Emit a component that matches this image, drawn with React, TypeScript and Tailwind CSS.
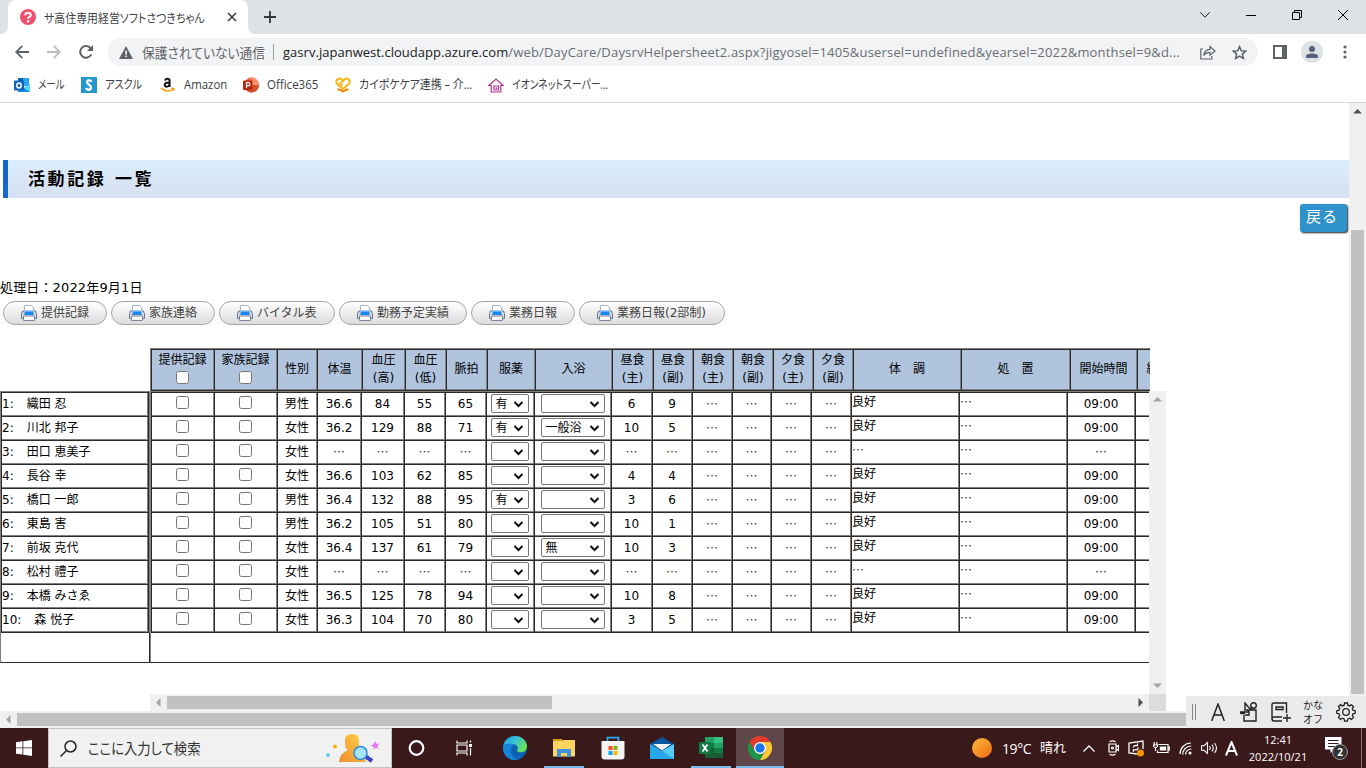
import { ReactNode } from 'react';

const PAGE_FONT = "font-['DejaVu_Sans','Noto_Sans_CJK_JP',sans-serif]";
const UI_FONT = "font-['Open_Sans','Noto_Sans_CJK_JP',sans-serif]";
const CELL = 'shrink-0 border-r border-b border-[#2b2b2b] shadow-[inset_-1px_-1px_0_#808080]';

interface Column {
  label: string[];
  head: string;
  body: string;
}

const columns: Column[] = [
  { label: ['提供記録'], head: 'w-[63px]', body: 'w-[63px]' },
  { label: ['家族記録'], head: 'w-[63px]', body: 'w-[63px]' },
  { label: ['性別'], head: 'w-[40px]', body: 'w-[40px]' },
  { label: ['体温'], head: 'w-[45px]', body: 'w-[44px]' },
  { label: ['血圧', '(高)'], head: 'w-[43px]', body: 'w-[43px]' },
  { label: ['血圧', '(低)'], head: 'w-[41px]', body: 'w-[41px]' },
  { label: ['脈拍'], head: 'w-[41px]', body: 'w-[41px]' },
  { label: ['服薬'], head: 'w-[48px]', body: 'w-[48px]' },
  { label: ['入浴'], head: 'w-[77px]', body: 'w-[77px]' },
  { label: ['昼食', '(主)'], head: 'w-[41px]', body: 'w-[41px]' },
  { label: ['昼食', '(副)'], head: 'w-[40px]', body: 'w-[40px]' },
  { label: ['朝食', '(主)'], head: 'w-[40px]', body: 'w-[40px]' },
  { label: ['朝食', '(副)'], head: 'w-[40px]', body: 'w-[39px]' },
  { label: ['夕食', '(主)'], head: 'w-[40px]', body: 'w-[40px]' },
  { label: ['夕食', '(副)'], head: 'w-[40px]', body: 'w-[40px]' },
  { label: ['体　調'], head: 'w-[108px]', body: 'w-[108px]' },
  { label: ['処　置'], head: 'w-[109px]', body: 'w-[108px]' },
  { label: ['開始時間'], head: 'w-[67px]', body: 'w-[68px]' },
  { label: ['終了時間'], head: 'w-[67px]', body: 'w-[68px]' },
];

interface Person {
  name: string;
  sex: string;
  temp: string;
  high: string;
  low: string;
  pulse: string;
  medicine: string;
  bath: string;
  main: string;
  side: string;
  condition: string;
  start: string;
}

const NONE = '…';

const people: Person[] = [
  { name: '織田 忍', sex: '男性', temp: '36.6', high: '84', low: '55', pulse: '65', medicine: '有', bath: '', main: '6', side: '9', condition: '良好', start: '09:00' },
  { name: '川北 邦子', sex: '女性', temp: '36.2', high: '129', low: '88', pulse: '71', medicine: '有', bath: '一般浴', main: '10', side: '5', condition: '良好', start: '09:00' },
  { name: '田口 恵美子', sex: '女性', temp: NONE, high: NONE, low: NONE, pulse: NONE, medicine: '', bath: '', main: NONE, side: NONE, condition: NONE, start: NONE },
  { name: '長谷 幸', sex: '女性', temp: '36.6', high: '103', low: '62', pulse: '85', medicine: '', bath: '', main: '4', side: '4', condition: '良好', start: '09:00' },
  { name: '橋口 一郎', sex: '男性', temp: '36.4', high: '132', low: '88', pulse: '95', medicine: '有', bath: '', main: '3', side: '6', condition: '良好', start: '09:00' },
  { name: '東島 害', sex: '男性', temp: '36.2', high: '105', low: '51', pulse: '80', medicine: '', bath: '', main: '10', side: '1', condition: '良好', start: '09:00' },
  { name: '前坂 克代', sex: '女性', temp: '36.4', high: '137', low: '61', pulse: '79', medicine: '', bath: '無', main: '10', side: '3', condition: '良好', start: '09:00' },
  { name: '松村 禮子', sex: '女性', temp: NONE, high: NONE, low: NONE, pulse: NONE, medicine: '', bath: '', main: NONE, side: NONE, condition: NONE, start: NONE },
  { name: '本橋 みさゑ', sex: '女性', temp: '36.5', high: '125', low: '78', pulse: '94', medicine: '', bath: '', main: '10', side: '8', condition: '良好', start: '09:00' },
  { name: '森 悦子', sex: '女性', temp: '36.3', high: '104', low: '70', pulse: '80', medicine: '', bath: '', main: '3', side: '5', condition: '良好', start: '09:00' },
];

const reports = [
  { label: '提供記録', width: 'w-[104px]' },
  { label: '家族連絡', width: 'w-[104px]' },
  { label: 'バイタル表', width: 'w-[116px]' },
  { label: '勤務予定実績', width: 'w-[128px]' },
  { label: '業務日報', width: 'w-[104px]' },
  { label: '業務日報(2部制)', width: 'w-[146px]' },
];

/* ---------- browser ---------- */

const TabStrip = () => (
  <div className="flex h-[34px] shrink-0 items-center bg-[#dee1e6]">
    <svg className="self-end" width="8" height="8" viewBox="0 0 8 8"><path d="M8 0v8H0q8 0 8-8" fill="#fff" /></svg>
    <div className="flex h-[34px] w-[240px] items-center rounded-t-lg bg-white pl-3">
      <svg width="16" height="16" viewBox="0 0 16 16">
        <circle cx="8" cy="8" r="8" fill="#f0506e" />
        <path d="M5.2 6.2C5.2 3 10.8 3 10.8 6.1 10.8 8 8.1 7.9 8.1 9.8" fill="none" stroke="#fff" strokeWidth="2" />
        <circle cx="8.1" cy="12.3" r="1.2" fill="#fff" />
      </svg>
      <div className="ml-2 w-[168px]">
        <span className="inline-block origin-left scale-x-[0.91] text-[12px] leading-5 whitespace-nowrap text-[#3c4043] [font-feature-settings:'palt']">
          サ高住専用経営ソフトさつきちゃん
        </span>
      </div>
      <svg className="ml-[15px]" width="10" height="10" viewBox="0 0 10 10">
        <path d="M1 1l8 8M9 1L1 9" stroke="#3c4043" strokeWidth="1.6" />
      </svg>
    </div>
    <svg className="self-end" width="8" height="8" viewBox="0 0 8 8"><path d="M0 0v8h8q-8 0-8-8" fill="#fff" /></svg>
    <svg className="ml-2" width="12" height="12" viewBox="0 0 12 12">
      <path d="M6 0v12M0 6h12" stroke="#35363a" strokeWidth="1.8" />
    </svg>
    <div className="mr-[18px] mb-1 ml-auto flex items-center gap-9">
      <svg width="10" height="6" viewBox="0 0 10 6" fill="none" stroke="#222"><path d="M.3.3L5 5.2 9.7.3" /></svg>
      <svg width="10" height="10" viewBox="0 0 10 10"><path d="M0 5.5h10" stroke="#000" /></svg>
      <svg width="10" height="10" viewBox="0 0 10 10" fill="none" stroke="#000"><path d="M.5 2.5h7v7h-7zM2.5 2.5v-2h7v7h-2" /></svg>
      <svg width="10" height="10" viewBox="0 0 10 10" stroke="#000"><path d="M0 0l10 10M10 0L0 10" /></svg>
    </div>
  </div>
);

const Toolbar = () => (
  <div className="flex h-9 shrink-0 items-center bg-white">
    <svg className="ml-[15px]" width="14" height="14" viewBox="0 0 14 14" fill="none" stroke="#5f6368" strokeWidth="1.8">
      <path d="M14 7H1.5M7.3.8L1.2 7l6.1 6.2" />
    </svg>
    <svg className="ml-[18px]" width="14" height="14" viewBox="0 0 14 14" fill="none" stroke="#babcbe" strokeWidth="1.8">
      <path d="M0 7h12.5M6.7.8L12.8 7l-6.1 6.2" />
    </svg>
    <svg className="ml-[18px]" width="15" height="14" viewBox="0 0 15 14">
      <path d="M12.2 9.4A5.8 5.8 0 1 1 11.6 3.4" fill="none" stroke="#5f6368" strokeWidth="2" />
      <path d="M14 0v6H8z" fill="#5f6368" />
    </svg>
    <div className="ml-[14px] flex h-7 w-[1150px] items-center rounded-full bg-[#f1f3f4] pl-[11px]">
      <svg width="14" height="13" viewBox="0 0 14 13">
        <path d="M7 0l7 13H0z" fill="#5f6368" />
        <path d="M6.3 4.5h1.5v4H6.3zM6.3 9.6h1.5v1.5H6.3z" fill="#fff" />
      </svg>
      <div className="ml-[9px] w-[131px]">
        <span className="inline-block origin-left scale-x-[0.91] text-[14px] leading-5 whitespace-nowrap text-[#5f6368] [font-feature-settings:'palt']">保護されていない通信</span>
      </div>
      <span className="h-4 w-px bg-[#9aa0a6]" />
      <span className="ml-[9px] w-[908px] text-[13px] leading-5 tracking-[0.18px] whitespace-nowrap text-[#6a6e73]">
        <span className="tracking-[0.03px] text-[#202124]">gasrv.japanwest.cloudapp.azure.com</span>
        /web/DayCare/DaysrvHelpersheet2.aspx?jigyosel=1405&amp;usersel=undefined&amp;yearsel=2022&amp;monthsel=9&amp;d...
      </span>
      <svg className="ml-[9px]" width="16" height="15" viewBox="0 0 16 15" fill="none" stroke="#5f6368" strokeWidth="1.2">
        <path d="M3 4H.8v10h11v-3" />
        <path d="M3.8 10.5C4.3 6.5 6.5 4.5 10 4.4V1.5l5 4.5-5 4.2V7.4C7.2 7.4 5.3 8.3 3.8 10.5z" />
      </svg>
      <svg className="ml-4" width="15" height="15" viewBox="0 0 15 15" fill="none" stroke="#5f6368" strokeWidth="1.5">
        <path d="M7.5 1.6l1.8 4.1 4.5.4-3.4 3 1 4.4-3.9-2.3-3.9 2.3 1-4.4-3.4-3 4.5-.4z" />
      </svg>
    </div>
    <svg className="ml-[15px]" width="14" height="14" viewBox="0 0 14 14">
      <path d="M1 1h12v12H1z" fill="#fff" stroke="#5f6368" strokeWidth="2" />
      <path d="M9 1h4v12H9z" fill="#5f6368" />
    </svg>
    <span className="ml-[14px] flex h-[22px] w-[22px] items-center justify-center rounded-full bg-[#dee1e6]">
      <svg width="12" height="12" viewBox="0 0 12 12" fill="#56617a">
        <circle cx="6" cy="3" r="3" />
        <path d="M0 12V10.2C0 6.6 12 6.6 12 10.2V12z" />
      </svg>
    </span>
    <svg className="ml-5" width="4" height="14" viewBox="0 0 4 14" fill="#5f6368">
      <circle cx="2" cy="2" r="1.6" />
      <circle cx="2" cy="7" r="1.6" />
      <circle cx="2" cy="12" r="1.6" />
    </svg>
  </div>
);

interface BookmarkProps {
  label: string;
  width: string;
  scale: string;
  children: ReactNode;
}

const Bookmark = ({ label, width, scale, children }: BookmarkProps) => (
  <div className={`flex shrink-0 items-center gap-2 ${width}`}>
    <svg className="shrink-0" width="16" height="16" viewBox="0 0 16 16">{children}</svg>
    <span className={`inline-block origin-left text-[12px] leading-5 whitespace-nowrap text-[#3c4043] [font-feature-settings:'palt'] ${scale}`}>{label}</span>
  </div>
);

const Bookmarks = () => (
  <div className="flex h-[33px] shrink-0 items-center border-b border-[#d5d7da] bg-white pb-[3px] pl-[14px]">
    <Bookmark label="メール" width="w-[67px]" scale="scale-x-[0.79]">
      <path d="M4 1h11v8H4z" fill="#28a8ea" />
      <path d="M4 1h5v7H4z" fill="#0364b8" />
      <path d="M4 7l6 4 6-4v8H4z" fill="#1490df" />
      <path d="M10 11l6-4v8z" fill="#50d9ff" />
      <rect y="3.5" width="10" height="10" rx="1" fill="#0f63b8" />
      <ellipse cx="5" cy="8.5" rx="2.2" ry="2.5" fill="none" stroke="#fff" strokeWidth="1.5" />
    </Bookmark>
    <Bookmark label="アスクル" width="w-[79px]" scale="scale-x-[0.85]">
      <path d="M0 0h16v16H0z" fill="#2497cd" />
      <path d="M10.6 4.8C9.5 2.6 5.7 3 6.1 5.4 6.5 7.8 10.3 8 10 10.7 9.6 13.4 5.9 13.3 5 11" fill="none" stroke="#fff" strokeWidth="2.4" />
    </Bookmark>
    <Bookmark label="Amazon" width="w-[83px]" scale="scale-x-[0.95]">
      <path d="M5.2 3.7C5.6 1.1 9.6 1.2 9.6 4v6M9.3 5.4C5.5 5.3 4.7 6.6 4.7 8c0 2.4 3.9 2.2 4.7-.2" fill="none" stroke="#111" strokeWidth="2" />
      <path d="M.8 10.8C4.7 14.9 10 14.7 13.8 12M11.5 11.4c2.5-.7 3.2 0 1.9 2.3" fill="none" stroke="#f90" strokeWidth="1.5" />
    </Bookmark>
    <Bookmark label="Office365" width="w-[92px]" scale="scale-x-[0.96]">
      <circle cx="8.5" cy="8" r="7.5" fill="#ed6c47" />
      <path d="M8.5.5A7.5 7.5 0 0 1 16 8H8.5z" fill="#ff8f6b" />
      <path d="M1 8h15a7.5 7.5 0 0 1-15 0z" fill="#d35230" />
      <rect y="3.5" width="9.5" height="9.5" rx="1" fill="#b7280f" />
      <path d="M3.5 11V5.7h1.7c2.4 0 2.4 3.2 0 3.2H3.5" fill="none" stroke="#fff" strokeWidth="1.2" />
    </Bookmark>
    <Bookmark label="カイポケケア連携 – 介..." width="w-[153px]" scale="scale-x-[0.91]">
      <path d="M8 12L2.3 7C-.3 3.8 3.5-.3 6.3 2.3L8 4" fill="none" stroke="#fdb515" strokeWidth="2" />
      <path d="M4.500 5.500L7.500 8.500M6.500 5.500L9.700 2.300c2.800-2.600 6.600 1.500 4 4.700L8 12" fill="none" stroke="#fdb515" strokeWidth="2" />
      <path d="M2.5 12.500c2-.5 3.500.5 5.500 2 2-1.500 3.500-2.500 5.500-2" fill="none" stroke="#f08300" strokeWidth="2" />
    </Bookmark>
    <Bookmark label="イオンネットスーパー..." width="w-[140px]" scale="scale-x-[0.82]">
      <path d="M1 8.5L8 2l7 6.5h-2.2V15H3.2V8.5z" fill="none" stroke="#b5338a" strokeWidth="1.2" />
      <path d="M6 9h4.5v4H6z" fill="none" stroke="#b5338a" strokeWidth="1.2" />
      <path d="M7.5 10.5H9V12H7.5z" fill="#b5338a" />
    </Bookmark>
  </div>
);

/* ---------- page ---------- */

const PrinterIcon = () => (
  <svg className="shrink-0" width="16" height="16" viewBox="0 0 16 16">
    <path d="M3.5 8V.5h7l2 2V8z" fill="#fff" stroke="#a9b4cc" />
    <path d="M3 6H1.500L.5 9v4.500h15V9l-1-3H13" fill="#d9dbe5" stroke="#6f7488" />
    <path d="M4 5.500h8l.8 4.500H3.200z" fill="#1a86ef" />
    <path d="M4 5h8v1.500H4z" fill="#9fd2fb" />
    <path d="M2.500 11h11v4.500h-11z" fill="#fafafc" stroke="#80859a" />
  </svg>
);

const SelectBox = ({ value, width }: { value: string; width: string }) => (
  <div className={`flex h-[19px] items-center rounded-[2px] border border-[#767676] bg-white pl-1 ${width}`}>
    <span className="leading-4">{value}</span>
    <svg className="mr-1 ml-auto" width="11" height="8" viewBox="0 0 11 8">
      <path d="M1.5 2l4 4 4-4" fill="none" stroke="#111" strokeWidth="2" />
    </svg>
  </div>
);

const Value = ({ text }: { text: string }) =>
  text === NONE ? (
    <span className="font-['Noto_Sans_CJK_JP',sans-serif] text-[#333]">{text}</span>
  ) : (
    <span>{text}</span>
  );

const HeaderRow = () => (
  <div className="h-[43px] w-[1000px] overflow-hidden border-t border-l border-[#808080]">
    <div className="flex h-[42px] border-t border-l border-[#2b2b2b]">
      {columns.map((col, i) => (
        <div key={i} className={`${CELL} ${col.head} flex h-[41px] flex-col items-center justify-center bg-[#b0c4de] pr-px pb-0.5 text-center leading-[18px]`}>
          {col.label.map((line) => (
            <div key={line} className="whitespace-nowrap">{line}</div>
          ))}
          {i < 2 && <input type="checkbox" className="mt-0.5 mb-[3px] h-[13px] w-[13px]" />}
        </div>
      ))}
    </div>
  </div>
);

const BodyRow = ({ person }: { person: Person }) => {
  const cells: ReactNode[] = [
    <input type="checkbox" className="mr-px mb-0.5 h-[13px] w-[13px]" />,
    <input type="checkbox" className="mr-px mb-0.5 h-[13px] w-[13px]" />,
    ...[person.sex, person.temp, person.high, person.low, person.pulse].map((v, i) => <Value key={i} text={v} />),
    <SelectBox value={person.medicine} width="mr-px w-[38px]" />,
    <SelectBox value={person.bath} width="w-[64px]" />,
    ...[person.main, person.side, NONE, NONE, NONE, NONE].map((v, i) => <Value key={i} text={v} />),
    <Value text={person.condition} />,
    <Value text={NONE} />,
    <Value text={person.start} />,
    null,
  ];

  return (
    <div className="flex">
      {cells.map((cell, i) => (
        <div key={i} className={`${CELL} ${columns[i].body} flex h-6 items-center ${i === 15 || i === 16 ? 'pb-[5px]' : 'justify-center pr-px pb-0.5'}`}>
          {cell}
        </div>
      ))}
    </div>
  );
};

const Arrow = ({ dir, dark }: { dir: 'up' | 'down' | 'left' | 'right'; dark?: boolean }) => {
  const paths = { up: 'M4 10.5h9L8.5 6z', down: 'M4 6.5h9L8.5 11z', left: 'M10.5 4v9L6 8.5z', right: 'M6.5 4v9L11 8.5z' };
  return (
    <svg className="shrink-0" width="17" height="17" viewBox="0 0 17 17">
      <path d={paths[dir]} fill={dark ? '#505050' : '#a3a3a3'} />
    </svg>
  );
};

const NameList = () => (
  <div className="mt-[43px] w-[150px] shrink-0">
    <div className="border-t border-r border-l border-[#808080]">
      <div className="border-t border-l border-[#2b2b2b]">
        {people.map((person, i) => (
          <div key={person.name} className={`${CELL} flex h-6 items-center gap-[13px] pb-0.5 whitespace-nowrap`}>
            <span>{i + 1}:</span>
            <span>{person.name}</span>
          </div>
        ))}
      </div>
    </div>
    <div className="h-[30px] border-r border-b border-l border-[#2b2b2b] border-l-[#808080]" />
  </div>
);

const RecordTable = () => (
  <div className="mt-[23px] flex text-[12px]">
    <NameList />
    <div className="w-[1016px]">
      <HeaderRow />
      <div className="flex h-[303px]">
        <div className="w-[999px] overflow-hidden">
          <div className="border-t border-l border-[#808080]">
            <div className="border-t border-l border-[#2b2b2b]">
              {people.map((person) => <BodyRow key={person.name} person={person} />)}
            </div>
          </div>
          <div className="h-[30px] border-b border-l border-[#2b2b2b] border-l-[#808080]" />
        </div>
        <div className="flex w-[17px] flex-col justify-between bg-[#f0f0f0]">
          <Arrow dir="up" />
          <Arrow dir="down" />
        </div>
      </div>
      <div className="flex h-[17px]">
        <div className="flex w-[999px] items-center bg-[#f0f0f0]">
          <Arrow dir="left" />
          <div className="h-[13px] w-[385px] bg-[#c1c1c1]" />
          <div className="ml-auto"><Arrow dir="right" dark /></div>
        </div>
        <div className="w-[17px] bg-[#dcdcdc]" />
      </div>
    </div>
  </div>
);

const Page = () => (
  <div className={`flex h-[608px] shrink-0 bg-white text-black ${PAGE_FONT}`}>
    <div className="w-[1349px] overflow-hidden pt-[57px]">
      <h1 className="ml-[3px] flex h-[38px] items-center border-l-[5px] border-[#1668c7] bg-linear-to-b from-[#daeefb] to-[#d7dff0] pt-0.5 pl-5 text-[17px] font-bold tracking-[2.6px]">
        活動記録 一覧
      </h1>
      <div className="flex justify-end pt-1.5 pr-0.5">
        <button className="h-7 w-[47px] rounded-[3px] bg-[#3092cb] pr-[3px] pb-0.5 text-[15px] tracking-[1px] text-white shadow-[1px_1px_2px_#222]">戻る</button>
      </div>
      <div className="mt-[47px] h-[18px] text-[13px] leading-[18px] tracking-[0.15px]">処理日：2022年9月1日</div>
      <div className="mt-1 ml-[3px] flex gap-1">
        {reports.map((r) => (
          <button key={r.label} className={`flex h-6 shrink-0 items-center gap-1 rounded-full border border-[#a5a5a5] bg-linear-to-b from-white to-[#dcdcdc] pl-[17px] text-[12px] whitespace-nowrap text-[#444] ${r.width}`}>
            <PrinterIcon />
            {r.label}
          </button>
        ))}
      </div>
      <RecordTable />
    </div>
    <div className="flex w-[17px] flex-col items-center bg-[#f0f0f0]">
      <Arrow dir="up" dark />
      <div className="mt-[110px] h-[464px] w-[13px] bg-[#c1c1c1]" />
    </div>
  </div>
);

/* ---------- desktop ---------- */

const ImeBar = () => (
  <div className="absolute top-[696px] left-[1186px] flex h-8 w-[180px] items-center bg-[#eaeaea] text-[#222]">
    <div className="ml-[6px] h-4 w-1 border-x border-[#888]" />
    <svg className="ml-[15px]" width="14" height="18" viewBox="0 0 14 18" fill="none" stroke="#222" strokeWidth="1.5">
      <path d="M.7 18L7 1l6.3 17M3 12h8" />
    </svg>
    <svg className="ml-[15px]" width="18" height="20" viewBox="0 0 18 20" fill="none" stroke="#222" strokeWidth="1.4">
      <path d="M5 7V1l5 6M4 13v6h12V8H9M10 8l2.5-3" />
      <circle cx="13.5" cy="3.5" r="2.8" />
      <path d="M0 10h9M4 8h4l1 2v3H5M0 10l1 1.5h4" />
    </svg>
    <svg className="ml-[13px]" width="20" height="20" viewBox="0 0 20 20" fill="none" stroke="#222" strokeWidth="1.4">
      <path d="M15.5 11V1H3Q1 1 1 3v13.5Q1 19 3 19h8M1 16.5Q1.5 15 3 15h8M5 5h7v2.5H5zM16 12v8M12 16h8" />
    </svg>
    <div className="ml-[11px] w-[22px] text-center text-[10px] leading-[14px]">
      <div>かな</div>
      <div>オフ</div>
    </div>
    <svg className="ml-3" width="20" height="20" viewBox="0 0 20 20" fill="none" stroke="#222" strokeWidth="1.3">
      <path d="M8.6 1h2.8l.5 2.2 1.6.7 2-1.2 2 2-1.2 1.9.7 1.7 2.2.5v2.5l-2.2.5-.7 1.7 1.2 1.9-2 2-2-1.2-1.6.7-.5 2.2H8.6l-.5-2.2-1.7-.7-1.9 1.2-2-2 1.2-1.9L3 11.8.8 11.3V8.8L3 8.3l.7-1.7-1.2-1.9 2-2 1.9 1.2 1.7-.7z" />
      <circle cx="10" cy="10" r="3.3" />
    </svg>
  </div>
);

const TaskItem = ({ running, active, children }: { running?: boolean; active?: boolean; children: ReactNode }) => (
  <div className={`flex h-10 flex-col items-center ${active ? 'ml-px w-12 bg-[#5f4648]' : 'w-[49px]'}`}>
    <div className="flex h-[38px] items-center pt-0.5">
      <svg width="24" height="24" viewBox="0 0 24 24">{children}</svg>
    </div>
    {running && <div className={`h-0.5 bg-[#76b9ed] ${active ? 'w-full' : 'w-10'}`} />}
  </div>
);

const SearchBox = () => (
  <div className="flex h-10 w-[344px] items-center border border-[#c4c4c4] bg-[#f1f1f1] pl-[11px]">
    <svg className="shrink-0" width="17" height="17" viewBox="0 0 17 17" fill="none" stroke="#222" strokeWidth="1.5">
      <circle cx="10.5" cy="6.5" r="5.5" />
      <path d="M6.5 10.5L.5 16.5" />
    </svg>
    <div className="ml-[11px] w-[120px]">
      <span className="inline-block origin-left scale-x-[0.89] text-[15px] whitespace-nowrap text-[#333] [font-feature-settings:'palt']">ここに入力して検索</span>
    </div>
    <svg className="mr-3 ml-auto" width="54" height="30" viewBox="0 0 54 30">
      <defs>
        <linearGradient id="person" x1="0" y1="1" x2="1" y2="0">
          <stop offset="0" stopColor="#ee8c2b" />
          <stop offset="1" stopColor="#ffd54a" />
        </linearGradient>
      </defs>
      <circle cx="10" cy="13.5" r="2" fill="#ffb000" />
      <circle cx="3" cy="22" r="2" fill="#6ad3ea" />
      <path d="M20 7q0-6 7-6t7 6v4q0 6-4 7 10 2 11 11H14q1-9 9-12-3-2-3-6z" fill="url(#person)" />
      <path d="M40 23l7 5" stroke="#3a3fd0" strokeWidth="4" />
      <circle cx="35.5" cy="20" r="6.5" fill="#a8e4f7" stroke="#2f8bd8" strokeWidth="1.5" />
      <path d="M50 8l1.2 2.7 3-.2-1.7 2.5 1 2.8-2.8-1-2 2-.3-3-2.7-1.3 2.7-1.2z" fill="#e878f5" />
    </svg>
  </div>
);

const Tray = () => (
  <div className="mr-[4px] ml-auto flex items-center text-white">
    <div className="h-5 w-5 rounded-full bg-linear-to-br from-[#f9b937] to-[#f06a10]" />
    <span className="ml-[10px] w-[38px] text-[14px] tracking-[-0.4px] whitespace-nowrap">19°C</span>
    <span className="w-[43px] text-[13px] whitespace-nowrap">晴れ</span>
    <svg width="12" height="7" viewBox="0 0 12 7" fill="none" stroke="#fff" strokeWidth="1.3"><path d="M.5 6.5L6 1l5.5 5.5" /></svg>
    <svg className="ml-[13px]" width="11" height="16" viewBox="0 0 11 16" fill="none" stroke="#fff" strokeWidth="1.2">
      <path d="M1 4h7v8H1zM8 7l2.5-1.5v5L8 9M1.5 1.7Q4.500 0 7.500 1.700M1.500 14.300q3 1.700 6 0" />
      <circle cx="4.5" cy="8" r="1" />
    </svg>
    <svg className="ml-[9px]" width="17" height="17" viewBox="0 0 17 17" fill="none" stroke="#fff" strokeWidth="1.3">
      <path d="M9 14L1 13V3l14-2v8" />
      <path d="M5 7.5q1-2.5 4-2M9.5 3.5v2.2H7.3M10.5 7.5q-1 3-4.5 2.5M5.3 12V9.8h2.2" strokeWidth="1.1" />
      <circle cx="12.5" cy="13" r="3.5" fill="#f79400" stroke="none" />
    </svg>
    <svg className="ml-[8px]" width="17" height="12" viewBox="0 0 17 12" fill="none" stroke="#fff" strokeWidth="1.2">
      <path d="M5.5 2.5H15v8H4.500V8.500M15 5h1.400v3H15M1.200 0v2.500M3.800 0v2.500M.5 3h4v1.500q-2 2.500-4 0zM2.500 6v3" />
      <path d="M6.8 4.5h6.4v4H6.800z" fill="#fff" stroke="none" />
    </svg>
    <svg className="ml-[9px]" width="14" height="13" viewBox="0 0 14 13" fill="none" stroke="#fff">
      <path d="M1 12A11 11 0 0 1 12 1M3.7 12.5a8.5 8.5 0 0 1 8.5-8.5M6.5 12.5a5.8 5.8 0 0 1 5.8-5.5" strokeWidth="1.2" />
      <circle cx="11" cy="11" r="1.5" fill="#fff" stroke="none" />
    </svg>
    <svg className="ml-[8px]" width="17" height="14" viewBox="0 0 17 14" fill="none" stroke="#fff" strokeWidth="1.1">
      <path d="M.6 4.7h2.5L6.5 1.500v11L3.100 9.300H.6zM8.500 5q1.500 2 0 4M11 3.500q2.500 3.500 0 7M13.500 2q4 5 0 10" />
    </svg>
    <svg className="ml-[7px]" width="13" height="15" viewBox="0 0 13 15" fill="none" stroke="#fff" strokeWidth="2">
      <path d="M1 14.5L6.5 1 12 14.5M3 10h7" />
    </svg>
    <div className="ml-[9px] w-[62px] text-center text-[11px] leading-[17px]">
      <div>12:41</div>
      <div className="whitespace-nowrap">2022/10/21</div>
    </div>
    <div className="relative ml-4 h-[22px] w-[25px]">
      <svg width="17" height="16" viewBox="0 0 17 16">
        <path d="M0 0h16.5v12.5H9L5.500 16v-3.500H0z" fill="#fff" />
        <path d="M3 3.5h10.5M3 6.5h10.5M3 9.5h7" stroke="#3a191b" />
      </svg>
      <span className="absolute top-[7px] left-[7px] flex h-4 w-4 items-center justify-center rounded-full border border-[#999] bg-[#333] text-[10px] leading-none font-bold">2</span>
    </div>
    <div className="ml-[11px] h-10 w-px bg-[#8a7577]" />
  </div>
);

const Taskbar = () => (
  <div className="flex h-10 shrink-0 items-center bg-[#3a191b]">
    <div className="flex w-12 justify-center">
      <svg width="16" height="16" viewBox="0 0 16 16" fill="#fff">
        <path d="M0 2.2L6.5 1.3v6.2H0zM7.3 1.2L16 0v7.5H7.3zM0 8.3h6.5v6.3L0 13.7zM7.3 8.3H16V16l-8.7-1.2z" />
      </svg>
    </div>
    <SearchBox />
    <TaskItem>
      <circle cx="11.5" cy="12" r="6.8" fill="none" stroke="#fff" strokeWidth="2.2" />
    </TaskItem>
    <TaskItem>
      <path d="M3 4.5V7h10V4.5M3 19.5V17h10v2.5M3 9h10v6H3zM16.5 4.5v2M16.5 12v7.5" fill="none" stroke="#fff" strokeWidth="1.2" />
      <path d="M15 8h3v3h-3z" fill="#fff" />
    </TaskItem>
    <TaskItem>
      <defs>
        <linearGradient id="edgeTop" x1="0" x2="1" y1="0" y2=".5">
          <stop offset="0" stopColor="#1b9de2" />
          <stop offset=".5" stopColor="#35c1d8" />
          <stop offset="1" stopColor="#6ae25a" />
        </linearGradient>
      </defs>
      <circle cx="12" cy="12" r="12" fill="#0c64b8" />
      <path d="M.2 10C1.5 3.5 6.5 0 12 0c7 0 12 5 12 10 0 4.5-3 6.2-6 6.2-3 0-4.5-1.2-3.5-2.7C16 11 13 8 9.5 8 6 8 2 8 .2 10z" fill="url(#edgeTop)" />
      <path d="M.2 10C3 6.5 10 7 12 9c-4 .5-5 4-4 8 .8 3.5 4 6 6.5 6.7C6 25.5 0 19 0 12z" fill="#1583d8" />
      <path d="M11.5 10.5c-2 3 0 8 5 8.500 2.500 0 4-.8 6-1.800C21.500 18.500 18 19.500 15.500 19 10.500 18 9.500 13 11.500 10.500z" fill="#3a191b" />
    </TaskItem>
    <TaskItem running>
      <path d="M1 3h9l1.5 2H1z" fill="#d89a10" />
      <path d="M1 5h9l2-1h11v16.5H1z" fill="#ffd560" />
      <path d="M5 13h14v8h-4v-4H9v4H5z" fill="#3b94dd" />
    </TaskItem>
    <TaskItem>
      <path d="M6.5 6V1.7h11V6" fill="none" stroke="#2ba8ee" strokeWidth="1.8" />
      <path d="M.5 5h23v15.5q0 3-3 3h-17q-3 0-3-3z" fill="#f4f4f4" />
      <path d="M7.5 10h4v4h-4z" fill="#f25022" /><path d="M12.5 10h4v4h-4z" fill="#7fba00" />
      <path d="M7.5 15h4v4h-4z" fill="#00a4ef" /><path d="M12.5 15h4v4h-4z" fill="#ffb900" />
    </TaskItem>
    <TaskItem>
      <path d="M0 8l12-7 12 7v5H0z" fill="#0b55a5" />
      <path d="M0 8l12 7L24 8v15H0z" fill="#28a8ea" />
      <path d="M24 8v15L12 15z" fill="#55cdf8" />
      <path d="M3 8h18l-9 6.5z" fill="#f5f5f5" />
    </TaskItem>
    <TaskItem running>
      <path d="M6 1h9v21H6z" fill="#21a366" /><path d="M15 1h9v6h-9z" fill="#33c481" />
      <path d="M15 7h9v5h-9z" fill="#21a366" /><path d="M6 12h18v10H6z" fill="#185c37" />
      <path d="M6 7h9v5H6zM15 12h9v5h-9z" fill="#107c41" />
      <rect y="6" width="12" height="12" rx="1" fill="#107c41" />
      <path d="M3.5 8.5l5 7M8.5 8.5l-5 7" stroke="#fff" strokeWidth="1.8" />
    </TaskItem>
    <TaskItem running active>
      <path d="M12 6h10.4A12 12 0 0 1 12 24l5-9z" fill="#fcc934" />
      <path d="M1.6 6A12 12 0 0 0 12 24l5-9-10 0z" fill="#1e9648" />
      <path d="M1.6 6A12 12 0 0 1 22.4 6H12L7 15z" fill="#e33b2e" />
      <circle cx="12" cy="12" r="6" fill="#fff" />
      <circle cx="12" cy="12" r="4.7" fill="#1a73e8" />
    </TaskItem>
    <Tray />
  </div>
);

const App = () => {
  return (
    <div className={`relative flex h-[768px] w-[1366px] flex-col overflow-hidden bg-white ${UI_FONT}`}>
      <TabStrip />
      <Toolbar />
      <Bookmarks />
      <Page />
      <div className="flex h-[17px] shrink-0 items-center bg-[#f0f0f0]">
        <Arrow dir="left" />
        <div className="h-[13px] flex-1 bg-[#c1c1c1]" />
      </div>
      <Taskbar />
      <ImeBar />
    </div>
  );
};

export default App;
